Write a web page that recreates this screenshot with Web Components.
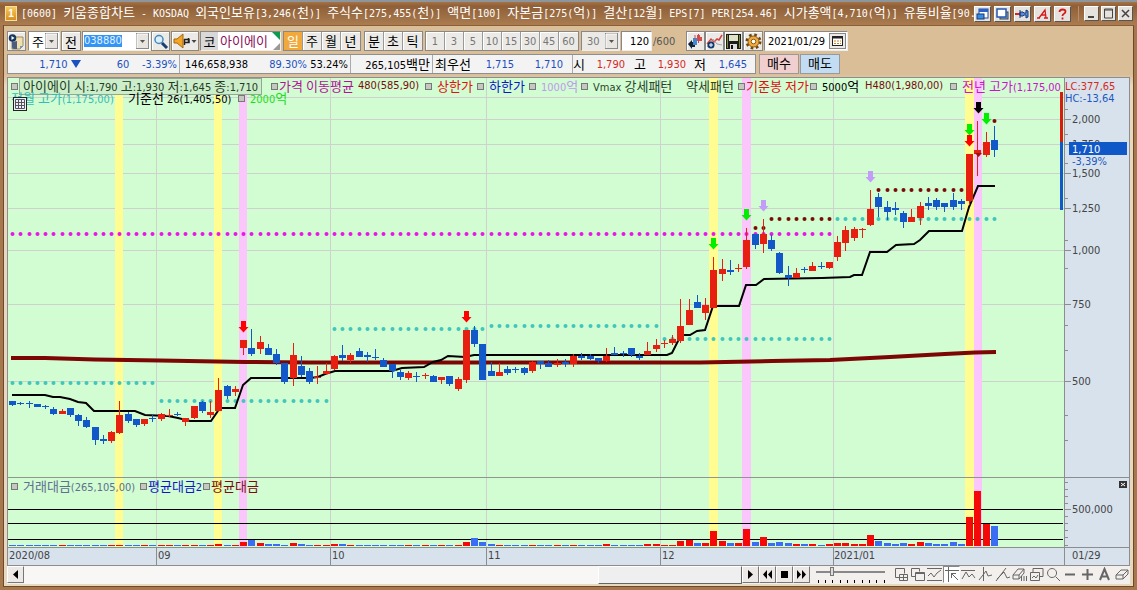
<!DOCTYPE html>
<html lang="ko">
<head>
<meta charset="utf-8">
<title>[0600] 키움종합차트</title>
<style>
html,body{margin:0;height:100%}
body{font-family:"DejaVu Sans Condensed","Noto Sans CJK KR",sans-serif;font-size:11px;color:#000;background:#a5784d}
</style>
</head>
<body>
<hts-window>
  <title-bar slot="title"></title-bar>
  <chart-toolbar></chart-toolbar>
  <quote-bar></quote-bar>
  <chart-panel></chart-panel>
  <nav-bar></nav-bar>
</hts-window>
<script>
const ko = s => s.replace(/[가-힣]+/g, m => `<span class="ko">${m}</span>`);
const BASE = `
*{box-sizing:border-box}
.ko{font:13px/1 "Noto Sans CJK KR",sans-serif}
button,input,select{font:inherit;color:inherit;margin:0;padding:0;border-radius:0}
svg{display:block}
`;
function define(name, css, html, init) {
  customElements.define(name, class extends HTMLElement {
    constructor() {
      super();
      const root = this.attachShadow({mode: 'open'});
      const t = document.createElement('template');
      t.innerHTML = `<style>${BASE}${css}</style>${typeof html === 'function' ? html(this) : html}`;
      root.append(t.content.cloneNode(true));
      if (init) init(root, this);
    }
  });
}

/* ---------- window frame ---------- */
define('hts-window', `
:host{display:flex;flex-direction:column;min-height:100vh;background:#a5784d;border-top:2px solid #8d969c;box-sizing:border-box}
.body{flex:1;display:flex;flex-direction:column;margin:0 3px 3px;border:1px solid #6f482a;border-top-color:#8a5f38;
  background:linear-gradient(#d9be98 48px,#e9d8c0 60px);padding:5px 3px 2px}
`, `<slot name="title"></slot><div class="body"><slot></slot></div>`);

/* ---------- title bar ---------- */
define('title-bar', `
:host{display:flex;align-items:center;height:23px;padding:0 4px 0 5px;background:linear-gradient(#a67347,#8f5f37 4px,#aa7c50);color:#fff}
.no{width:12px;height:15px;background:linear-gradient(#f6c95c,#d98f1c);border:1px solid #f8dfa0;font:bold 10px/13px "Liberation Sans",sans-serif;text-align:center}
h1{flex:1;min-width:0;margin:0 0 0 4px;font:10px/23px "DejaVu Sans Mono","Noto Sans CJK KR",monospace;white-space:pre;overflow:hidden}
.grp{display:flex;gap:3px}
.grp button{width:17px;height:16px;border:1px solid #fff;border-right-color:#555;border-bottom-color:#555;background:#e6e3de;display:grid;place-items:center}
.win{gap:2px;margin-left:7px;padding-left:5px;border-left:1px solid #b89070}
.win button{width:15px;height:15px}
`, `<span class="no">1</span><h1>${ko('[0600] 키움종합차트 - KOSDAQ 외국인보유[3,246(천)] 주식수[275,455(천)] 액면[100] 자본금[275(억)] 결산[12월] EPS[7] PER[254.46] 시가총액[4,710(억)] 유통비율[90.')}</h1>
<div class="grp">
<button aria-label="화면 전환"><svg width="13" height="12"><rect x="3" y="1" width="9" height="9" fill="#fff" stroke="#1b4aa0"/><rect x="3" y="1" width="9" height="3" fill="#2b62c8"/><rect x="1" y="6" width="7" height="5" fill="#3b8ce0" stroke="#15397c"/></svg></button>
<button aria-label="화면 복사"><svg width="13" height="12"><rect x="4" y="4" width="8" height="7" fill="#9ab" stroke="#345"/><rect x="1" y="1" width="9" height="8" fill="#fff" stroke="#2456b0" stroke-width="1.5"/></svg></button>
<button aria-label="고정"><svg width="15" height="12"><path d="M0 6h5" stroke="#d22" stroke-width="2"/><path d="M5 2v8M5 4h3l1 1h2V2l2 1v6l-2 1V7H9L8 8H5z" fill="#5f8ad0" stroke="#153c80"/></svg></button>
<button aria-label="글꼴"><svg width="13" height="12"><path d="M1 10h3M8 10h4M3 10L9 2L10 10M5 7h5" fill="none" stroke="#d41a1a" stroke-width="1.300"/></svg></button>
<button aria-label="도움말"><svg width="13" height="12"><path d="M3.500 4q0-2.500 3-2.500t3 2q0 1.500-1.500 2.200T6.500 8M6.500 9.500v2" fill="none" stroke="#d41a1a" stroke-width="1.800"/></svg></button>
</div>
<div class="grp win">
<button aria-label="최소화"><svg width="11" height="11"><path d="M2 9h6" stroke="#444" stroke-width="2"/></svg></button>
<button aria-label="최대화"><svg width="11" height="11"><path d="M1.500 1v9h8V1zM1 2h9" fill="none" stroke="#444"/></svg></button>
<button aria-label="닫기"><svg width="11" height="11"><path d="M2 2l7 7M9 2l-7 7" stroke="#444" stroke-width="1.500"/></svg></button>
</div>`);

/* ---------- toolbar ---------- */
const combo = '<svg width="13" height="16" class="dd"><rect x=".5" y=".5" width="12" height="15" fill="#e8e5e0" stroke="#888"/><path d="M1 15V1h11" stroke="#fff" fill="none"/><path d="M4 7h5l-2.500 3z" fill="#555"/></svg>';
const pads = (list, cls='') => `<div class="seg ${cls}">${list.map((t,i)=>`<button class="${t==='일'?'on':''}">${ko(t)}</button>`).join('')}</div>`;
define('chart-toolbar', `
:host{display:flex;align-items:stretch;height:20px;margin-bottom:3px;white-space:nowrap}
.b{border:1px solid #888;background:#eceae6;display:grid;place-items:center;box-shadow:inset 1px 1px #fff}
.f{position:relative;display:flex;align-items:center;border:1px solid #888;border-right-color:#eee;border-bottom-color:#eee;background:#fff}
.dd{position:absolute;right:1px;top:1px;pointer-events:none}
select,input{appearance:none;border:0;background:none;width:100%;height:100%;outline:0}
.f select{padding-left:3px}
.ks select{font:13px/1 "Noto Sans CJK KR",sans-serif}
.seg{display:flex;border:1px solid #888;margin-left:2px}
.seg button{width:19px;border:0;border-right:1px solid #999;background:#eceae6;box-shadow:inset 1px 1px #fff}
.seg button:last-child{border-right:0}
.seg .on{background:#f0a93a;color:#fff;box-shadow:none}
.num button{color:#777}
.f .iv{padding-left:5px}
.stock{width:81px;margin-left:1px;gap:2px}
.stock .k{background:#d8d8d8;width:17px;height:18px;display:grid;place-items:center}
.stock svg{position:absolute;right:0;top:0}
.code label{padding-left:1px}
.code input{display:block;width:38px;height:12px;background:#3295f5;color:#e4f1ff;line-height:12px}
`, `
<button class="b" style="width:19px" aria-label="차트 메뉴"><svg width="17" height="17"><path d="M7 4h8v9l-3 3H4V9z" fill="#f2dfb0" stroke="#9a8a60"/><path d="M4 9v5q0 2 2 2h3V8z" fill="#4a5f80"/><circle cx="4.500" cy="5" r="3.800" fill="#17365f"/><path d="M3.500 3v4l3-2z" fill="#fff"/><path d="M12 16v-3h3z" fill="#7a95b8"/></svg></button>
<div class="f ks" style="width:32px;margin-left:2px"><select aria-label="시장"><option>주</option></select>${combo}</div>
<button class="b" style="width:20px;margin-left:1px">${ko('전')}</button>
<div class="f code" style="width:69px;margin-left:1px"><label><input aria-label="종목코드" value="038880"></label>${combo}</div>
<button class="b" style="width:19px" aria-label="종목 검색"><svg width="17" height="17"><circle cx="7" cy="6.500" r="4" fill="#d8f0fc" stroke="#4a86b8" stroke-width="1.500"/><path d="M10 10l5 5" stroke="#1a3c70" stroke-width="3"/></svg></button>
<button class="b" style="width:28px;margin-left:1px" aria-label="소리"><svg width="26" height="17"><path d="M2 6h3l6-5v14l-6-5H2z" fill="#f5a524" stroke="#a5670c"/><path d="M12.500 6v6M12 6.500h5v3h-4M16.500 5v5" stroke="#222" fill="none" stroke-width="1.500"/><path d="M19.500 7h5l-2.500 3z" fill="#444"/></svg></button>
<div class="f stock"><span class="k">${ko('코')}</span><span style="color:#8a0f5c">${ko('아이에이')}</span><svg width="9" height="18"><path d="M1 0h8v8z" fill="#0a9a50"/><path d="M9 11v7H2z" fill="#999"/></svg></div>
${pads(['일','주','월','년'])}<span style="width:1px"></span>${pads(['분','초','틱'])}${pads(['1','3','5','10','15','30','45','60'],'num')}
<div class="f" style="width:39px;margin-left:2px;background:#eceae6;color:#777"><select class="iv" aria-label="간격"><option>30</option></select>${combo}</div>
<div class="f" style="width:31px;margin-left:1px"><input aria-label="봉 개수" value="120" style="text-align:right;padding-right:2px"></div>
<span style="align-self:center;width:25px;margin-left:1px;color:#555">/600</span>
<button class="b" style="width:19px;margin-left:8px" aria-label="봉 유형"><svg width="17" height="17"><path d="M1 11l4-4v2h3v5H5v2z" fill="#123"/><path d="M6 5h4v7H6z" fill="#3f87d8"/><path d="M10 2h3v6h-3zM13 4h2v4h-2z" fill="#e04848"/><path d="M8 2v4M11.500 1v9" stroke="#c05050"/></svg></button>
<button class="b" style="width:19px" aria-label="지표 추가"><svg width="17" height="17"><path d="M1 11l4-5 3 3 3-3 2 1 3-5" fill="none" stroke="#d84040" stroke-width="1.500"/><path d="M1 14l6-8 4 5 5 1" fill="none" stroke="#9aa" /><circle cx="5" cy="12" r="3.500" fill="#123a70"/><path d="M3 12h4M5 10v4" stroke="#fff"/></svg></button>
<button class="b" style="width:19px" aria-label="저장"><svg width="17" height="17"><path d="M1 1h15v15H1z" fill="#1c1c1c"/><path d="M4 2h9v6H4z" fill="#dfe6c8"/><path d="M2.500 2v13M14.500 2v13" stroke="#7d8d30"/><path d="M5 11h7v5H5z" fill="#ddd"/><path d="M6 12h2v4H6z" fill="#111"/></svg></button>
<button class="b" style="width:20px" aria-label="설정"><svg width="17" height="17"><circle cx="8.500" cy="8.500" r="6.500" fill="none" stroke="#6a4510" stroke-width="3" stroke-dasharray="2.500 2.600"/><circle cx="8.500" cy="8.500" r="5.500" fill="#f2a93c" stroke="#8a5a14"/><circle cx="8.500" cy="8.500" r="2.300" fill="#fff" stroke="#8a5a14"/></svg></button>
<div class="f" style="width:84px;margin-left:1px"><input aria-label="날짜" value="2021/01/29" style="padding-left:3px"><svg class="dd" width="17" height="16"><rect x=".5" y=".5" width="16" height="15" fill="#eceae6" stroke="#888"/><rect x="3.500" y="3.500" width="10" height="9" fill="#fff" stroke="#222"/><path d="M3 4.500h11" stroke="#222" stroke-width="2"/><path d="M5 8h7M5 10.500h7" stroke="#d08020" stroke-dasharray="2 1"/></svg></div>
`);

/* ---------- quote bar ---------- */
define('quote-bar', `
:host{display:flex;height:20px;margin-bottom:3px}
dl{display:flex;margin:0;width:749px;border:1px solid #8f8f8f;background:#f3f3f4}
dl div{display:flex;align-items:center;justify-content:flex-end;border-right:1px solid #aaa;white-space:pre;padding-right:2px}
dl div:last-child{border:0;padding-right:8px}
dd,dt{margin:0;text-align:right}
.dn{color:#1c50c0}.up{color:#d8281c}
button{width:40px;border:1px solid #999;margin-left:3px;line-height:16px}
button+button{margin-left:1px}
`, `<dl>
<div style="width:172px"><dd class="dn" style="width:60px">1,710</dd><dd class="dn"><svg width="16" height="10"><path d="M3 1h10l-5 8z" fill="#1c50c0"/></svg></dd><dd class="dn" style="width:46px">60</dd><dd class="dn" style="width:48px">-3.39%</dd></div>
<div style="width:171px"><dd style="width:66px">146,658,938</dd><dd class="dn" style="width:59px">89.30%</dd><dd style="width:41px">53.24%</dd></div>
<div style="width:82px"><dd>265,105${ko('백만')}</dd></div>
<div style="width:140px;padding-right:9px"><dt>${ko('최우선')}</dt><dd class="dn" style="width:43px">1,715</dd><dd class="dn" style="width:49px">1,710</dd></div>
<div style="flex:1"><dt>${ko('시')}</dt><dd class="up" style="width:40px">1,790</dd><dt style="width:21px">${ko('고')}</dt><dd class="up" style="width:40px">1,930</dd><dt style="width:20px">${ko('저')}</dt><dd class="dn" style="width:41px">1,645</dd></div>
</dl>
<button style="background:#f2cfcf">${ko('매수')}</button><button style="background:#c2dcf4">${ko('매도')}</button>`);

/* ---------- legend row: label|colour|width|marker ---------- */
define('chart-legend', `
:host{display:block}
.r{display:flex;height:12px}
.i{flex:none;display:flex;align-items:center;height:12px;line-height:12px;white-space:pre}
.m::before{content:"";width:5px;height:5px;flex:none;border:1px solid #777;background:#c4c8c0;margin-right:5px}
.t::before{margin-right:1px}
.x span.l{border:1px solid #93a893;background:#cdeecb;padding:0 3px;margin-left:-4px}
`, el => el.getAttribute('rows').split('//').map(r => `<div class="r">${r.split(';').map(i => {
  const [text, color, w, cls] = i.split('|');
  return `<span class="i ${cls||''}" style="color:${color};width:${w}px"><span class="l">${ko(text)}</span></span>`;
}).join('')}</div>`).join(''));

/* ---------- plot data ---------- */
/* colour, body top, body bottom, high, low */
const BARS = `b401,405,401,406 b403,404,402,405 b403,404,401,408 b404,407,404,407 b406,407,405,409 b409,414,407,415 r411,414,409,414 b408,415,408,417 b415,421,414,426 b420,427,417,428
b427,440,427,445 b439,441,435,444 r432,441,431,443 r415,433,401,434 b414,421,412,423 b419,425,419,427 r419,424,419,426 b418,419,415,422 r414,419,413,421 r415,416,409,417
b414,415,412,416 r418,422,418,426 r406,418,406,419 b402,411,401,413 r412,415,401,418 r390,411,378,412 b386,396,385,399 r389,392,386,396 r340,348,340,355 b348,354,329,356
r342,349,336,354 b348,355,344,355 b354,363,349,365 b363,382,363,384 r355,378,343,386 b366,375,356,377 b371,382,368,384 r377,378,366,384 r371,374,363,375 r356,369,355,370
b355,358,345,361 r355,360,353,363 b351,357,348,357 b355,357,352,362 b357,358,349,360 b360,367,358,367 b364,371,364,378 b372,377,370,380 r373,378,371,380 b376,377,372,382
r375,376,373,379 b376,382,375,382 r377,380,377,384 b376,384,376,386 r379,389,377,391 r330,380,330,383 b330,344,326,347 b344,380,344,380 b371,376,362,376 r372,376,363,376
b369,373,366,375 b369,370,367,373 b368,373,367,375 r362,371,361,373 b361,364,361,369 b363,367,360,367 r363,365,359,367 b362,364,359,367 r356,364,354,367 b356,358,353,360
b356,359,354,360 b358,361,358,363 r356,361,348,362 b353,355,347,355 b353,354,351,357 b348,355,348,357 b356,358,353,360 r351,355,342,355 r345,349,339,352 r343,344,340,348
r339,343,335,345 r326,341,299,343 r310,325,299,325 b302,308,295,308 r305,313,298,320 r270,308,257,308 r269,274,259,281 b270,272,260,275 r268,269,264,272 r240,267,228,269
b234,245,234,249 r234,244,219,253 b240,249,235,251 b253,273,252,274 b275,278,266,286 r273,278,268,278 b269,270,267,273 r266,271,262,271 b266,267,262,269 r262,268,262,269
r242,257,236,261 r230,243,226,251 r229,238,227,241 r229,230,228,238 r209,225,190,226 b197,207,193,217 b207,212,201,220 b208,210,202,215 b213,222,211,228 r217,222,209,222
r206,218,202,225 b203,206,197,210 b200,207,198,210 b203,207,203,212 b200,207,193,210 b201,204,199,210 r154,201,154,205 r150,154,121,176 r142,155,132,157 b140,150,126,157`
  .split(/\s+/).map(s => [s[0], ...s.slice(1).split(',').map(Number)]);
const VOL = {25:2,28:4,29:6,30:3,31:2,32:2,34:3,35:2,39:2,40:2,55:4,56:8,57:4,58:2,72:2,77:2,78:2,81:5,82:6,83:3,84:3,85:15,86:5,87:3,88:3,89:17,90:4,91:9,92:3,93:4,94:3,95:2,96:2,97:2,99:2,100:3,101:3,102:2,103:2,104:11,105:5,106:3,107:2,108:3,109:2,110:4,111:3,112:2,113:2,114:4,115:2,116:29,117:55,118:22,119:20};
const X = i => Math.round(12 + i * 8.25);
const BASELINE = 'M12 395H45L53 397H60L70 399L78 402L86 403L94 411H135L145 415L168 416L178 418L190 421H211L220 408H235L243 385L251 378H310L318 377L325 374L335 371H392L402 368L424 367L433 362L441 360L448 356L465 357L474 355H667L672 353L681 335H690L697 331L705 330L713 306H739L746 285H756L764 279L822 278L850 277L854 275H862L870 252H887L896 245L914 244L920 240L929 231H962L969 207L978 186H995';
const AVG = 'M11 358H45L95 359.500L160 360.500L245 362L310 362.500H700L772 361L830 360L890 357L945 354L975 352.500L996 352';
const dots = (y, a, b, c) => { let s=''; for (let i=a;i<=b;i++) s+=`<circle cx="${X(i)}.5" cy="${y}" r="2" fill="${c}"/>`; return s; };
const arrow = (x, y, c) => `<path d="M${x-2} ${y}h5v6h2.500l-5 5.500l-5-5.500h2.500z" fill="${c}"/>`;
const band = (x, w, c) => `<rect x="${x}" y="78" width="${w}" height="469" fill="${c}"/>`;
function plot() {
  const T='#3fc6bd', M='#e816e8', D='#7a0c08', Y='#fffd92', P='#fbc6fb';
  let s = '';
  for (const y of [97,119,144,173,208,250,304,381]) s += `<path d="M8 ${y}.5H1064" stroke="#cdd2cd"/>`;
  s += band(115,8,Y)+band(214,8,Y)+band(239,8,P)+band(709,9,Y)+band(742,9,P)+band(965,9,Y)+band(974,8,P);
  for (const x of [156,330,486,660,833]) s += `<path d="M${x}.5 78V547" stroke="#cdd2cd"/>`;
  s += `<path d="M8 477.500H1064" stroke="#8e978e"/>`;
  s += `<path d="${AVG}" fill="none" stroke="#7c0604" stroke-width="4"/>`;
  s += dots(234,0,99,M)+dots(383,0,17,T)+dots(401,18,38,T)+dots(329,39,57,T)+dots(326,58,78,T)+dots(339,79,99,T)+dots(219,100,119,T);
  s += dots(228,90,91,D)+dots(219,92,99,D)+dots(190,105,115,D)+dots(121,119,119,D);
  s += `<path d="${BASELINE}" fill="none" stroke="#000" stroke-width="2"/>`;
  BARS.forEach(([c,t,b,h,l],i) => {
    const x = X(i), f = c==='r' ? '#e61f10' : '#1258c8';
    s += `<rect x="${x}" y="${h}" width="1" height="${l-h}" fill="${f}"/><rect x="${x-3}" y="${t}" width="7" height="${b-t}" fill="${f}"/>`;
  });
  s += `<path d="M975 153h7l-3.500 4z" fill="#a01008"/>`;
  s += arrow(243,321,'#f00')+arrow(466,311,'#f00')+arrow(713,238,'#0e0')+arrow(746,209,'#0e0')+arrow(763,200,'#c39bf8')+arrow(870,171,'#c39bf8')+arrow(978,102,'#000')+arrow(969,124,'#0e0')+arrow(969,135,'#f00')+arrow(986,113,'#0e0');
  for (const y of [509,523,539]) s += `<path d="M8 ${y}.500H1063" stroke="#000"/>`;
  BARS.forEach(([c],i) => { const v = VOL[i]||1; s += `<rect x="${X(i)-3}" y="${546-v}" width="7" height="${v}" fill="${c==='r'?'#f40808':'#3a6cf4'}"/>`; });
  s += `<path d="M1061.500 92V142" stroke="#d81c10" stroke-width="3"/><path d="M1061.500 142V210" stroke="#1258c8" stroke-width="3"/>`;
  return s;
}
const axisTicks = () => {
  let s = '';
  for (const y of [119,144,173,208,250,304,381,509]) s += `<path d="M1065 ${y}.500h6"/>`;
  for (const y of [109,134,163,198,240,268,325,350,415,440,482,489,496,503,516,523,530,537,545]) s += `<path d="M1065 ${y}.500h3"/>`;
  return s;
};
define('chart-panel', `
:host{flex:1;display:grid;grid-template:1fr 18px/1fr 65px;border:1px solid #8d8d8d;border-bottom:0;background:#d7e2ed;min-height:470px}
.plot,.axis{position:relative;overflow-x:clip;overflow-y:visible;min-width:0}
.plot{background:#d2fcd2}
.plot>svg{position:absolute;inset:0;width:100%;height:100%}
chart-legend{position:absolute;left:3px;right:0;top:2px}
chart-legend.vol{top:402px}
.tb{position:absolute;left:5px;top:19px;width:14px;height:14px;border:1px solid #222;background:#eef;display:grid;place-items:center;padding:0}
.axis{border-left:1px solid #8d8d8d}
.axis>svg{position:absolute;left:0;top:0}
.dates{grid-column:1;border-top:1px solid #8d8d8d}
.dates svg{width:100%;height:17px}
.last{border-top:1px solid #8d8d8d;border-left:1px solid #8d8d8d}
text{fill:#444}
`, `<div class="plot"><svg viewBox="8 78 1056 469" preserveAspectRatio="none">${plot()}</svg>
<chart-legend rows="아이에이 시:1,790 고:1,930 저:1,645 종:1,710|#243c24|260|m x;가격 이동평균|#b4109c|87|m t;480(585,90)|#7a0c0c|67;상한가|#e01010|52|m;하한가|#0c18c8|52|m;1000억|#c09af0|52|m;Vmax 강세패턴|#2c442c|105|m;약세패턴|#2c442c|52;기준봉 저가|#e01010|72|m t;5000억|#000|55|m;H480(1,980,00)|#7a0c0c|85;전년 고가(1,175,00|#d010d0|120|m//전월 고가(1,175,00)|#35bdb5|117;기준선 26(1,405,50)|#000|110;2000억|#16e016|60|m"></chart-legend>
<button class="tb" aria-label="데이터 표"><svg width="10" height="10"><path d="M.5.5h9v9h-9zM0 3.500h10M0 6.500h10M3.500 0v10M6.500 0v10" fill="none" stroke="#555"/></svg></button>
<chart-legend class="vol" rows="거래대금(265,105,00)|#5c7090|129|m;평균대금2|#0c18c8|63|m t;평균대금|#7a0c0c|70|m t"></chart-legend></div>
<div class="axis"><svg width="64" height="469" viewBox="1065 78 64 469"><g stroke="#8d8d8d">${axisTicks()}<path d="M1065 477.500h65"/></g>
<text x="1065" y="90" style="fill:#d8281c">LC:377,65</text><text x="1065" y="102" style="fill:#1c58c0">HC:-13,64</text>
<text x="1072" y="123">2,000</text><text x="1072" y="148">1,750</text><rect x="1069" y="142" width="58" height="13" fill="#1058c8"/><text x="1072" y="153" style="fill:#fff">1,710</text>
<text x="1072" y="165" style="fill:#1c58c0">-3,39%</text><text x="1072" y="177">1,500</text><text x="1072" y="212">1,250</text><text x="1072" y="254">1,000</text><text x="1072" y="308">750</text><text x="1072" y="385">500</text><text x="1072" y="513">500,000</text>
<rect x="1119" y="481" width="8" height="7" fill="#333"/><path d="M1121 483l4 3M1125 483l-4 3" stroke="#fff"/></svg></div>
<div class="dates"><svg viewBox="8 548 1056 17" preserveAspectRatio="xMinYMin meet"><path d="M156.500 548v17M330.500 548v17M486.500 548v17M660.500 548v17M833.500 548v17" stroke="#8d8d8d"/><text x="9" y="559">2020/08</text><text x="158" y="559">09</text><text x="332" y="559">10</text><text x="488" y="559">11</text><text x="662" y="559">12</text><text x="834" y="559">2021/01</text></svg></div>
<div class="last"><svg width="64" height="17"><text x="7" y="11">01/29</text></svg></div>`);

/* ---------- bottom navigation ---------- */
const ICONS = {
 '새 창':'M6 10.500H2.500v-9h9v5M6.500 7.500h8v6h-8zM10.500 7.500v6M6.500 10.500h8',
 '겹치기':'M5 9.500H1.500v-8h8v3M5.500 5.500h9v8h-9zM5.500 6.500h9',
 '영역':'M0 1.500h15M0 13.500h15M1 9l3-3 3 4 3-4 4-3',
 '커서':'M1 3.500h14M4.500 0v15M7 6l7 7M7.500 6v5M7 6.500h5',
 '추세선':'M0 3.500h14M1 12l4-7 3 5 3-3 3 4',
 '수직선':'M5.500 0v14M1 13l4-5 3-4 2 5 4-1',
 '자동 추세':'M1 14L11 1M2 12l7-7 3 6 3-1',
 '전체 지우기':'M1 8l5-6h6l-5 6zM1 8v4h6V8M7 12l5-6V2M9.500 9v5M12 9v5M14.500 9v5',
 '차트 겹침':'M4 5V1.500h10v8h-3M1.500 5.500h9v8h-9zM3 11l2-2 2 2 2-3',
 '확대경':'M6 1.500a4.500 4.500 0 1 0 .1 0M9.500 9.500l4.500 4.500',
 '축소':'M2 7.500h10','확대':'M2 7.500h11M7.500 2v11',
 '자동':'M3 13L7.500 2L12 13M4.500 9.500h6',
 '지우개':'M2 8l5-5h7l-5 5zM2 8v4h7V8M9 12l5-5V3'
};
const heavy = {'축소':1,'확대':1,'자동':1};
define('nav-bar', `
:host{display:flex;height:18px;border-top:1px solid #8d8d8d;background:#f2efec}
button{flex:none;border:1px solid #fff;border-right-color:#777;border-bottom-color:#777;background:#ece9e6;display:grid;place-items:center;width:17px;height:17px}
.track{flex:1;display:flex;justify-content:flex-end;background:#f8f7f6}
.thumb{width:144px;border:1px solid #fff;border-right-color:#666;border-bottom-color:#666;background:#efefef}
.sl{position:relative;width:82px;padding:0 6px}
.sl input{appearance:none;display:block;width:69px;height:9px;margin:1px 0 0;background:linear-gradient(#888,#888) 0 4px/100% 2px no-repeat}
.sl input::-webkit-slider-thumb{appearance:none;width:4px;height:9px;background:#ddd;border:1px solid #777}
.sl svg{margin-top:4px}
.ic button{border-color:transparent;background:none}
.ic{display:flex}
.ic .p{border-color:#888 #fff #fff #888;background:#fff}
`, `<button aria-label="이전"><svg width="9" height="9"><path d="M7 0v9L2 4.500z"/></svg></button>
<div class="track"><div class="thumb"></div></div>
<button aria-label="재생"><svg width="9" height="9"><path d="M2 0v9l5-4.500z"/></svg></button>
<button aria-label="뒤로"><svg width="9" height="9"><path d="M4 0v9L0 4.500zM9 0v9L5 4.500z"/></svg></button>
<button aria-label="정지"><svg width="9" height="9"><path d="M1 1h7v7H1z"/></svg></button>
<button aria-label="앞으로"><svg width="9" height="9"><path d="M0 0v9l4-4.500zM5 0v9l4-4.500z"/></svg></button>
<div class="sl"><input type="range" aria-label="속도" value="22"><svg width="70" height="3"><path d="M2.500 0v3M9.500 0v3M16.500 0v3M24.500 0v3M31.500 0v3M38.500 0v3M46.500 0v3M53.500 0v3M60.500 0v3M68.500 0v3" stroke="#000"/></svg></div>
<div class="ic">${Object.entries(ICONS).map(([n,d])=>`<button class="${n==='커서'?'p':''}" aria-label="${n}"><svg width="15" height="15"><path d="${d}" fill="none" stroke="#666" stroke-width="${heavy[n]?2:1}"/></svg></button>`).join('')}</div>`);
</script>
</body>
</html>
